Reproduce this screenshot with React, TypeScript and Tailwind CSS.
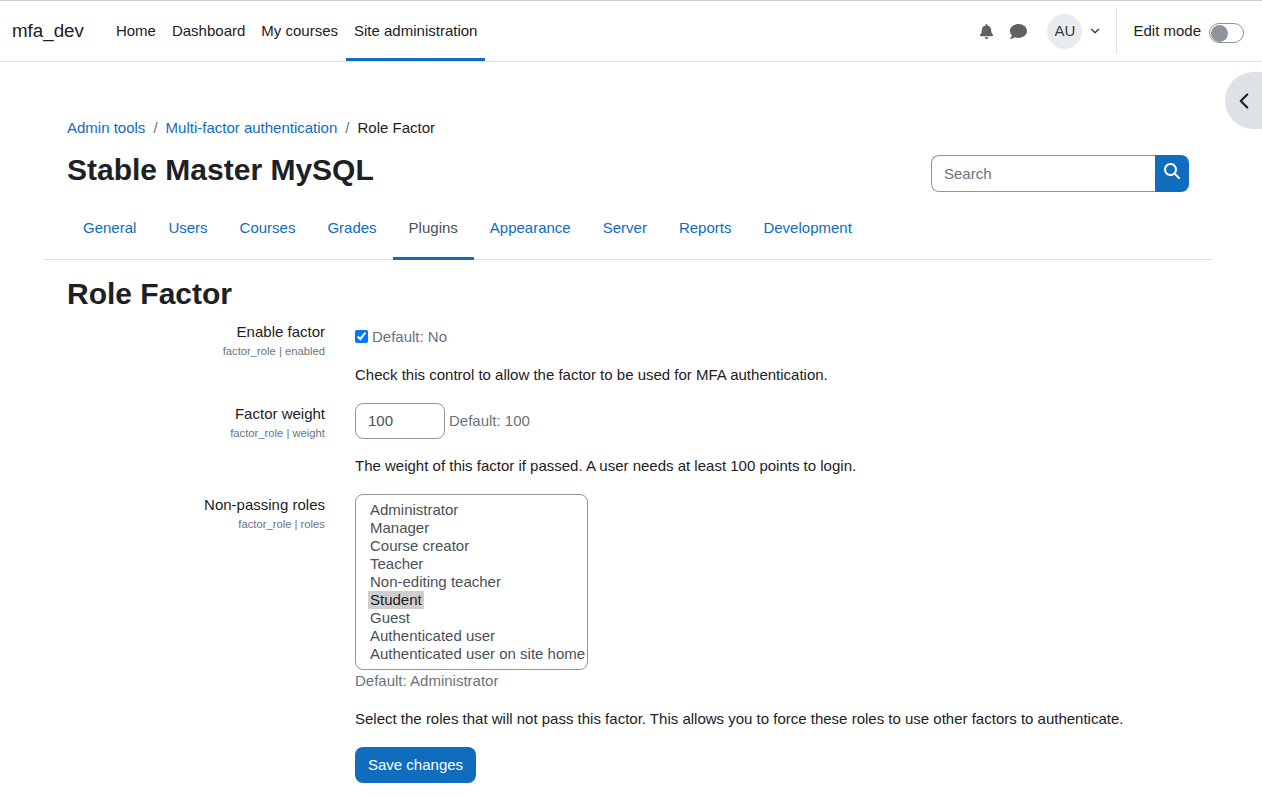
import { ChevronDown, ChevronLeft } from "lucide-react";
import { FaBell, FaComment } from "react-icons/fa";
import { FaMagnifyingGlass } from "react-icons/fa6";

const navLinks = ["Home", "Dashboard", "My courses", "Site administration"];
const tabs = ["General", "Users", "Courses", "Grades", "Plugins", "Appearance", "Server", "Reports", "Development"];
const roles = [
  "Administrator",
  "Manager",
  "Course creator",
  "Teacher",
  "Non-editing teacher",
  "Student",
  "Guest",
  "Authenticated user",
  "Authenticated user on site home",
];

function Navbar() {
  return (
    <nav className="flex h-[62px] items-stretch border-y border-t-[#cccccc] border-b-[#dee2e6] bg-white pl-3 pr-[18px]">
      <div className="flex items-center pr-[24px] text-[18.75px] leading-none">mfa_dev</div>
      <div className="flex items-stretch">
        {navLinks.map((l) => (
          <div
            key={l}
            className={
              l === "Site administration"
                ? "flex items-center border-b-[3px] border-[#0f6cbf] px-2 pt-[3px]"
                : "flex items-center border-b-[3px] border-transparent px-2 pt-[3px]"
            }
          >
            {l}
          </div>
        ))}
      </div>
      <div className="ml-auto flex items-center">
        <FaBell className="mr-[16px] h-[15px] w-[15px] text-[#616161]" />
        <FaComment className="mr-[20px] h-[17px] w-[17px] text-[#616161]" />
        <div className="flex h-[35px] w-[35px] items-center justify-center rounded-full bg-[#e9ecef] text-[#343a40]">AU</div>
        <ChevronDown className="ml-[6px] mr-[14px] h-[14px] w-[14px] text-[#343a40]" strokeWidth={2.2} />
        <div className="flex h-[46px] items-center border-l border-[#dee2e6] pl-4">
          <span>Edit mode</span>
          <div className="ml-2 mt-[4px] flex h-[20px] w-[35px] items-center rounded-full border border-[#8f959e] bg-white pl-px">
            <div className="h-[17px] w-[17px] rounded-full bg-[#8f959e]"></div>
          </div>
        </div>
      </div>
    </nav>
  );
}

function Header() {
  return (
    <div className="ml-[44px] mr-[50px] pt-[55px]">
      <div className="flex h-[22px] items-center px-[23px]">
        <span className="text-[#0f6cbf]">Admin tools</span>
        <span className="px-2 text-[#6a737b]">/</span>
        <span className="text-[#0f6cbf]">Multi-factor authentication</span>
        <span className="px-2 text-[#6a737b]">/</span>
        <span>Role Factor</span>
      </div>
      <div className="flex items-start justify-between px-[23px] pt-[5px]">
        <h1 className="pt-[8px] text-[30px] font-bold leading-[36px]">Stable Master MySQL</h1>
        <div className="mt-[11px] flex h-[37px] w-[258px]">
          <div className="flex min-w-0 flex-1 items-center rounded-l-[8px] border border-r-0 border-[#8f959e] pl-3 pt-[2px] text-[#6a737b]">Search</div>
          <div className="flex w-[34px] items-center justify-center rounded-r-[8px] bg-[#0f6cbf] text-white">
            <FaMagnifyingGlass className="mb-[5px] h-[16px] w-[16px]" />
          </div>
        </div>
      </div>
      <div className="mt-[17px] flex h-[51px] items-start border-b border-[#dee2e6] pl-[23px]">
        {tabs.map((t) => (
          <div
            key={t}
            className={
              t === "Plugins"
                ? "flex h-[51px] items-start border-b-[3px] border-[#0f6cbf] px-4 pt-[8px] text-[#495057]"
                : "flex h-[50px] items-start px-4 pt-[8px] text-[#0f6cbf]"
            }
          >
            {t}
          </div>
        ))}
      </div>
    </div>
  );
}

function SettingLabel({ label, name }: { label: string; name: string }) {
  return (
    <div className="w-[258px] shrink-0 text-right">
      <div className="leading-[22px]">{label}</div>
      <div className="text-[11.25px] leading-[16px] text-[#6a737b]">{name}</div>
    </div>
  );
}

function Form() {
  return (
    <div className="px-[67px]">
      <h2 className="pt-[16px] text-[30px] font-bold leading-[36px]">Role Factor</h2>
      <div className="mt-[9px] flex gap-[30px]">
        <SettingLabel label="Enable factor" name="factor_role | enabled" />
        <div className="pt-[5px]">
          <div className="flex items-center leading-[22px]">
            <input type="checkbox" defaultChecked className="mb-[2px] h-[13px] w-[13px]" />
            <span className="ml-[4px] text-[#6a737b]">Default: No</span>
          </div>
          <p className="mt-[16px] leading-[22px]">Check this control to allow the factor to be used for MFA authentication.</p>
        </div>
      </div>
      <div className="mt-[17px] flex gap-[30px]">
        <SettingLabel label="Factor weight" name="factor_role | weight" />
        <div>
          <div className="flex items-center">
            <div className="flex h-[36px] w-[90px] items-center rounded-[8px] border border-[#8f959e] pl-3 text-[#495057]">100</div>
            <span className="ml-[4px] text-[#6a737b]">Default: 100</span>
          </div>
          <p className="mt-[16px] leading-[22px]">The weight of this factor if passed. A user needs at least 100 points to login.</p>
        </div>
      </div>
      <div className="mt-[17px] flex gap-[30px]">
        <SettingLabel label="Non-passing roles" name="factor_role | roles" />
        <div>
          <div className="h-[176px] w-[233px] rounded-[8px] border border-[#8f959e] pl-3 pt-[6px] text-[#495057]">
            {roles.map((r) => (
              <div
                key={r}
                className={r === "Student" ? "w-fit bg-[#cecece] px-[2px] leading-[18px] text-[#1d2125]" : "whitespace-nowrap px-[2px] leading-[18px]"}
              >
                {r}
              </div>
            ))}
          </div>
          <div className="leading-[22px] text-[#6a737b]">Default: Administrator</div>
          <p className="mt-[16px] leading-[22px]">Select the roles that will not pass this factor. This allows you to force these roles to use other factors to authenticate.</p>
          <button className="mt-[17px] h-[36px] rounded-[8px] bg-[#0f6cbf] px-[13px] text-white">Save changes</button>
        </div>
      </div>
    </div>
  );
}

export default function App() {
  return (
    <div className="relative h-[797px] overflow-hidden bg-white font-['Liberation_Sans',Arial,sans-serif] text-[15px] text-[#1d2125]">
      <Navbar />
      <Header />
      <Form />
      <div className="absolute right-0 top-[72px] flex h-[57px] w-[37px] items-center rounded-l-[29px] bg-[#dee2e6] pl-[6px]">
        <ChevronLeft className="h-[26px] w-[26px] text-[#1d2125]" strokeWidth={2} />
      </div>
    </div>
  );
}
